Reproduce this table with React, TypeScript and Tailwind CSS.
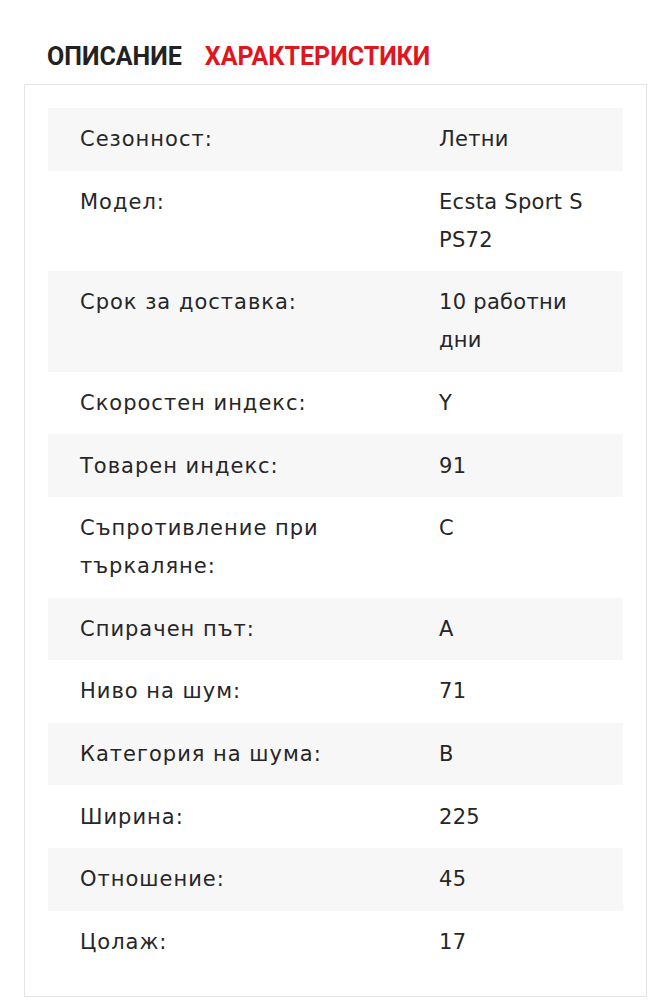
import React from 'react';

const specs: [string, string][] = [
  ['Сезонност:', 'Летни'],
  ['Модел:', 'Ecsta Sport S PS72'],
  ['Срок за доставка:', '10 работни дни'],
  ['Скоростен индекс:', 'Y'],
  ['Товарен индекс:', '91'],
  ['Съпротивление при търкаляне:', 'C'],
  ['Спирачен път:', 'A'],
  ['Ниво на шум:', '71'],
  ['Категория на шума:', 'B'],
  ['Ширина:', '225'],
  ['Отношение:', '45'],
  ['Цолаж:', '17'],
];

export default function App() {
  return (
    <div lang="bg" className="w-[671px] min-h-[1000px] bg-white pt-[42px]">
      {/* tabs */}
      <div className="flex items-center gap-[23px] pl-[47px] h-[30px] font-['Roboto',sans-serif] font-bold text-[25px] uppercase">
        <span className="text-[#222]">Описание</span>
        <span className="text-[#e0161f]">Характеристики</span>
      </div>

      {/* spec box */}
      <div className="mx-[24px] mt-[12px] border border-[#e4e4e4] px-[23px] pt-[23px] pb-[23px]">
        <div className="font-['DejaVu_Sans',sans-serif] text-[21px] leading-[38px] text-[#262626]">
          {specs.map(([label, value], i) => (
            <div
              key={label}
              className={`grid grid-cols-[391px_1fr] py-[12.3px] ${i % 2 === 0 ? 'bg-[#f7f7f7]' : 'bg-white'}`}
            >
              <div className="pl-[32px] pr-[24px] tracking-[1px]">{label}</div>
              <div className="pr-[24px] tracking-[0.3px]">{value}</div>
            </div>
          ))}
        </div>
      </div>
    </div>
  );
}
